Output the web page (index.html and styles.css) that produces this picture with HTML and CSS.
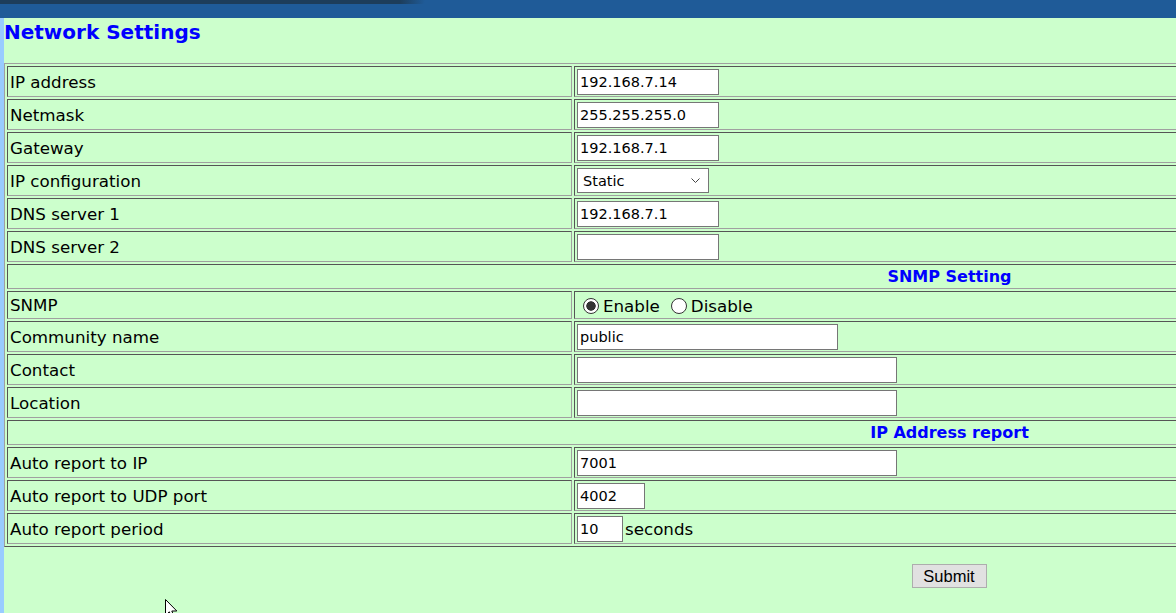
FILE: index.html
```html
<!DOCTYPE html>
<html>
<head>
<meta charset="utf-8">
<title>Network Settings</title>
<link rel="stylesheet" href="styles.css">
</head>
<body>
<div class="topbar"><div class="tab"></div></div>
<div class="page">
  <div class="sidebar"></div>
  <main class="content">
    <h1 class="title">Network Settings</h1>
    <form class="form">
      <table class="grid">
        <colgroup><col class="c-label"><col class="c-value"></colgroup>
        <tr><td>IP address</td><td><input class="in w142" value="192.168.7.14"></td></tr>
        <tr><td>Netmask</td><td><input class="in w142" value="255.255.255.0"></td></tr>
        <tr><td>Gateway</td><td><input class="in w142" value="192.168.7.1"></td></tr>
        <tr><td>IP configuration</td><td><span class="sel"><select><option>Static</option><option>DHCP</option></select><svg class="chev" width="9" height="5" viewBox="0 0 9 5"><path d="M0.5 0.5 L4.5 4.5 L8.5 0.5" fill="none" stroke="#444" stroke-width="1"/></svg></span></td></tr>
        <tr><td>DNS server 1</td><td><input class="in w142" value="192.168.7.1"></td></tr>
        <tr><td>DNS server 2</td><td><input class="in w142" value=""></td></tr>
        <tr class="sec"><td colspan="2">SNMP Setting</td></tr>
        <tr class="rad"><td>SNMP</td><td><span class="radios"><input type="radio" name="snmp" class="r first" checked><span>Enable</span><input type="radio" name="snmp" class="r"><span>Disable</span></span></td></tr>
        <tr><td>Community name</td><td><input class="in w261" value="public"></td></tr>
        <tr><td>Contact</td><td><input class="in w320" value=""></td></tr>
        <tr><td>Location</td><td><input class="in w320" value=""></td></tr>
        <tr class="sec"><td colspan="2">IP Address report</td></tr>
        <tr><td>Auto report to IP</td><td><input class="in w320" value="7001"></td></tr>
        <tr><td>Auto report to UDP port</td><td><input class="in w68" value="4002"></td></tr>
        <tr><td>Auto report period</td><td><input class="in w46" value="10"><span class="unit">seconds</span></td></tr>
      </table>
      <div class="actions"><button type="button" class="btn">Submit</button></div>
    </form>
  </main>
</div>
<svg class="cursor" width="13" height="20" viewBox="0 0 13 20"><path d="M0.5 0.5 L0.5 16.5 L4.3 12.8 L6.8 18.6 L9.2 17.6 L6.8 12 L11.8 12 Z" fill="#fff" stroke="#000" stroke-width="1"/></svg>
</body>
</html>
```
FILE: styles.css
```css
html, body {
  margin: 0;
  padding: 0;
  overflow: hidden;
  width: 1176px;
  height: 613px;
  background: #ccffcc;
  font-family: "DejaVu Sans", Verdana, sans-serif;
}

.topbar {
  height: 18px;
  background: #1f5b98;
  position: relative;
}

.tab {
  width: 425px;
  height: 4px;
  background: linear-gradient(to right, #1d3d5a 0, #1d3d5a 94%, #1f5b98 100%);
  border-bottom-right-radius: 3px;
}

.page {
  display: flex;
  height: 595px;
}

.sidebar {
  width: 4px;
  flex: 0 0 4px;
  background: #99ccff;
}

.content {
  flex: 1;
  background: #ccffcc;
  min-width: 0;
}

.title {
  margin: 0 0 19px 0;
  padding: 3px 0 0 0;
  font-size: 20px;
  line-height: 23px;
  font-weight: bold;
  color: #0000ff;
}

.form {
  width: 1890px;
  margin: 0;
}

.grid {
  width: 1890px;
  table-layout: fixed;
  border-collapse: separate;
  border-spacing: 2px;
  border: 1px solid;
  border-color: #a0a0a0 #555555 #555555 #a0a0a0;
}

.c-label { width: 565px; }

.grid td {
  box-sizing: border-box;
  height: 31px;
  padding: 1px 1px 1px 2px;
  border: 1px solid;
  border-color: #555555 #a0a0a0 #a0a0a0 #555555;
  font-size: 16.7px;
  color: #000;
  vertical-align: middle;
  white-space: nowrap;
}

.grid tr.sec td {
  height: 25px;
  text-align: center;
  font-weight: bold;
  font-size: 16px;
  color: #0000ff;
}

.grid tr.rad td { height: 28px; }

.in {
  box-sizing: border-box;
  height: 26px;
  margin: 0;
  padding: 0 2px;
  border: 1px solid #767676;
  background: #fff;
  font-family: "DejaVu Sans", Verdana, sans-serif;
  font-size: 14.5px;
  color: #000;
  vertical-align: middle;
  outline: none;
}

.w142 { width: 142px; }
.w261 { width: 261px; }
.w320 { width: 320px; }
.w68 { width: 68px; }
.w46 { width: 46px; }

.unit { margin-left: 2px; vertical-align: middle; }

.sel {
  position: relative;
  display: inline-block;
  width: 132px;
  height: 25px;
  vertical-align: middle;
}

.sel select {
  -webkit-appearance: none;
  appearance: none;
  box-sizing: border-box;
  width: 132px;
  height: 25px;
  margin: 0;
  padding: 0 0 0 5px;
  border: 1px solid #767676;
  border-radius: 0;
  background: #fff;
  font-family: "DejaVu Sans", Verdana, sans-serif;
  font-size: 14.5px;
  color: #000;
  outline: none;
}

.chev {
  position: absolute;
  right: 9px;
  top: 10px;
}

.radios {
  display: inline-flex;
  align-items: center;
  vertical-align: middle;
}

.r {
  -webkit-appearance: none;
  appearance: none;
  box-sizing: border-box;
  width: 16px;
  height: 16px;
  margin: 0 4px 0 11px;
  border: 1.5px solid #333;
  border-radius: 50%;
  background: #fff;
}

.r.first { margin-left: 6px; }

.r:checked {
  background: radial-gradient(circle, #333 0, #333 4.4px, #fff 5px);
}

.actions {
  text-align: center;
  margin-top: 17px;
}

.btn {
  box-sizing: border-box;
  width: 75px;
  height: 24px;
  padding: 0;
  border: 1px solid #adadad;
  background: #e1e1e1;
  font-family: "Liberation Sans", Arial, sans-serif;
  font-size: 16.5px;
  color: #000;
}

.cursor {
  position: absolute;
  left: 165px;
  top: 599px;
}
```
